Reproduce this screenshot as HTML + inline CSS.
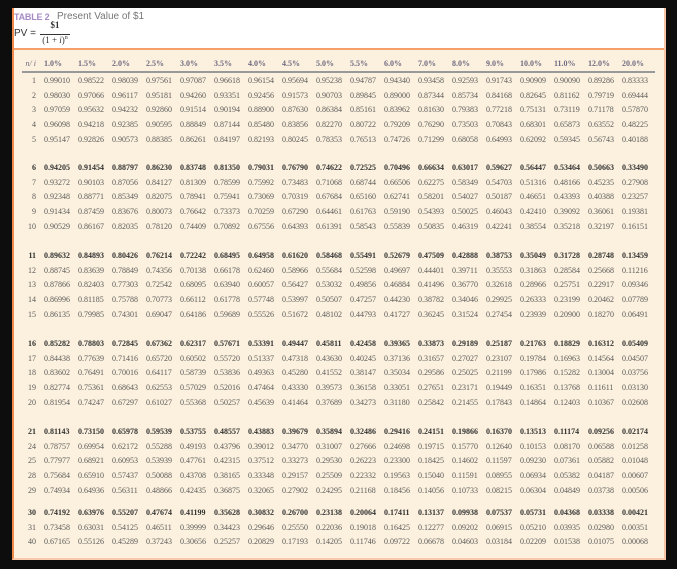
<!DOCTYPE html>
<html><head><meta charset="utf-8"><style>
html,body{margin:0;padding:0;background:#0d0d0d;width:677px;height:569px;overflow:hidden}
#panel{position:absolute;left:12px;top:8px;width:650px;height:550px;background:#fcf1de;border-left:2px solid #f08a4b;border-right:2px solid #f7c4a6;border-bottom:2px solid #f9c8ad}
#hdr{position:absolute;left:0;top:0;width:650px;height:40px;background:#fff;border-bottom:2px solid #f5a06a}
.t{position:absolute;font-family:"Liberation Sans",sans-serif;font-size:10px;color:#666;white-space:nowrap}
.s{font-family:"Liberation Serif",serif}
.g{position:absolute;left:-12px;font-family:"Liberation Serif",serif;font-size:8px;color:#5a5a5a}
.r{display:grid;grid-template-columns:42px repeat(18,34px);height:14.7px;line-height:14.7px;white-space:nowrap}
.r span:first-child{text-align:right;padding-right:8px}
.b{font-weight:bold;color:#333}
.h{font-weight:bold;color:#6f6a82}
</style></head><body>
<div id="panel">
<div id="hdr">
<div class="t" style="left:0;top:4px;color:#a58ac4;font-weight:bold;font-size:9px;letter-spacing:-0.2px">TABLE 2</div>
<div class="t" style="left:43px;top:3px;color:#777">Present Value of $1</div>
<div class="t" style="left:0;top:20px;color:#333">PV =</div>
<div class="t s" style="left:26px;top:12px;width:30px;text-align:center;font-weight:bold;color:#333;font-size:9px">$1</div>
<div style="position:absolute;left:26px;top:26px;width:30px;height:1px;background:#333"></div>
<div class="t s" style="left:24px;top:27px;width:34px;text-align:center;color:#333;font-size:9px">(1 + <i>i</i>)<sup style="font-size:6px">n</sup></div>
</div>
<div style="position:absolute;left:8px;top:63px;width:633px;height:2px;background:#999"></div>
<div class="g" style="top:49px"><div class="r h"><span style="font-style:italic;font-weight:normal">n/ i</span><span>1.0%</span><span>1.5%</span><span>2.0%</span><span>2.5%</span><span>3.0%</span><span>3.5%</span><span>4.0%</span><span>4.5%</span><span>5.0%</span><span>5.5%</span><span>6.0%</span><span>7.0%</span><span>8.0%</span><span>9.0%</span><span>10.0%</span><span>11.0%</span><span>12.0%</span><span>20.0%</span></div></div>
<div class="g" style="top:66px">
<div class="r"><span>1</span><span>0.99010</span><span>0.98522</span><span>0.98039</span><span>0.97561</span><span>0.97087</span><span>0.96618</span><span>0.96154</span><span>0.95694</span><span>0.95238</span><span>0.94787</span><span>0.94340</span><span>0.93458</span><span>0.92593</span><span>0.91743</span><span>0.90909</span><span>0.90090</span><span>0.89286</span><span>0.83333</span></div>
<div class="r"><span>2</span><span>0.98030</span><span>0.97066</span><span>0.96117</span><span>0.95181</span><span>0.94260</span><span>0.93351</span><span>0.92456</span><span>0.91573</span><span>0.90703</span><span>0.89845</span><span>0.89000</span><span>0.87344</span><span>0.85734</span><span>0.84168</span><span>0.82645</span><span>0.81162</span><span>0.79719</span><span>0.69444</span></div>
<div class="r"><span>3</span><span>0.97059</span><span>0.95632</span><span>0.94232</span><span>0.92860</span><span>0.91514</span><span>0.90194</span><span>0.88900</span><span>0.87630</span><span>0.86384</span><span>0.85161</span><span>0.83962</span><span>0.81630</span><span>0.79383</span><span>0.77218</span><span>0.75131</span><span>0.73119</span><span>0.71178</span><span>0.57870</span></div>
<div class="r"><span>4</span><span>0.96098</span><span>0.94218</span><span>0.92385</span><span>0.90595</span><span>0.88849</span><span>0.87144</span><span>0.85480</span><span>0.83856</span><span>0.82270</span><span>0.80722</span><span>0.79209</span><span>0.76290</span><span>0.73503</span><span>0.70843</span><span>0.68301</span><span>0.65873</span><span>0.63552</span><span>0.48225</span></div>
<div class="r"><span>5</span><span>0.95147</span><span>0.92826</span><span>0.90573</span><span>0.88385</span><span>0.86261</span><span>0.84197</span><span>0.82193</span><span>0.80245</span><span>0.78353</span><span>0.76513</span><span>0.74726</span><span>0.71299</span><span>0.68058</span><span>0.64993</span><span>0.62092</span><span>0.59345</span><span>0.56743</span><span>0.40188</span></div>
</div>
<div class="g" style="top:153px">
<div class="r b"><span>6</span><span>0.94205</span><span>0.91454</span><span>0.88797</span><span>0.86230</span><span>0.83748</span><span>0.81350</span><span>0.79031</span><span>0.76790</span><span>0.74622</span><span>0.72525</span><span>0.70496</span><span>0.66634</span><span>0.63017</span><span>0.59627</span><span>0.56447</span><span>0.53464</span><span>0.50663</span><span>0.33490</span></div>
<div class="r"><span>7</span><span>0.93272</span><span>0.90103</span><span>0.87056</span><span>0.84127</span><span>0.81309</span><span>0.78599</span><span>0.75992</span><span>0.73483</span><span>0.71068</span><span>0.68744</span><span>0.66506</span><span>0.62275</span><span>0.58349</span><span>0.54703</span><span>0.51316</span><span>0.48166</span><span>0.45235</span><span>0.27908</span></div>
<div class="r"><span>8</span><span>0.92348</span><span>0.88771</span><span>0.85349</span><span>0.82075</span><span>0.78941</span><span>0.75941</span><span>0.73069</span><span>0.70319</span><span>0.67684</span><span>0.65160</span><span>0.62741</span><span>0.58201</span><span>0.54027</span><span>0.50187</span><span>0.46651</span><span>0.43393</span><span>0.40388</span><span>0.23257</span></div>
<div class="r"><span>9</span><span>0.91434</span><span>0.87459</span><span>0.83676</span><span>0.80073</span><span>0.76642</span><span>0.73373</span><span>0.70259</span><span>0.67290</span><span>0.64461</span><span>0.61763</span><span>0.59190</span><span>0.54393</span><span>0.50025</span><span>0.46043</span><span>0.42410</span><span>0.39092</span><span>0.36061</span><span>0.19381</span></div>
<div class="r"><span>10</span><span>0.90529</span><span>0.86167</span><span>0.82035</span><span>0.78120</span><span>0.74409</span><span>0.70892</span><span>0.67556</span><span>0.64393</span><span>0.61391</span><span>0.58543</span><span>0.55839</span><span>0.50835</span><span>0.46319</span><span>0.42241</span><span>0.38554</span><span>0.35218</span><span>0.32197</span><span>0.16151</span></div>
</div>
<div class="g" style="top:241px">
<div class="r b"><span>11</span><span>0.89632</span><span>0.84893</span><span>0.80426</span><span>0.76214</span><span>0.72242</span><span>0.68495</span><span>0.64958</span><span>0.61620</span><span>0.58468</span><span>0.55491</span><span>0.52679</span><span>0.47509</span><span>0.42888</span><span>0.38753</span><span>0.35049</span><span>0.31728</span><span>0.28748</span><span>0.13459</span></div>
<div class="r"><span>12</span><span>0.88745</span><span>0.83639</span><span>0.78849</span><span>0.74356</span><span>0.70138</span><span>0.66178</span><span>0.62460</span><span>0.58966</span><span>0.55684</span><span>0.52598</span><span>0.49697</span><span>0.44401</span><span>0.39711</span><span>0.35553</span><span>0.31863</span><span>0.28584</span><span>0.25668</span><span>0.11216</span></div>
<div class="r"><span>13</span><span>0.87866</span><span>0.82403</span><span>0.77303</span><span>0.72542</span><span>0.68095</span><span>0.63940</span><span>0.60057</span><span>0.56427</span><span>0.53032</span><span>0.49856</span><span>0.46884</span><span>0.41496</span><span>0.36770</span><span>0.32618</span><span>0.28966</span><span>0.25751</span><span>0.22917</span><span>0.09346</span></div>
<div class="r"><span>14</span><span>0.86996</span><span>0.81185</span><span>0.75788</span><span>0.70773</span><span>0.66112</span><span>0.61778</span><span>0.57748</span><span>0.53997</span><span>0.50507</span><span>0.47257</span><span>0.44230</span><span>0.38782</span><span>0.34046</span><span>0.29925</span><span>0.26333</span><span>0.23199</span><span>0.20462</span><span>0.07789</span></div>
<div class="r"><span>15</span><span>0.86135</span><span>0.79985</span><span>0.74301</span><span>0.69047</span><span>0.64186</span><span>0.59689</span><span>0.55526</span><span>0.51672</span><span>0.48102</span><span>0.44793</span><span>0.41727</span><span>0.36245</span><span>0.31524</span><span>0.27454</span><span>0.23939</span><span>0.20900</span><span>0.18270</span><span>0.06491</span></div>
</div>
<div class="g" style="top:329px">
<div class="r b"><span>16</span><span>0.85282</span><span>0.78803</span><span>0.72845</span><span>0.67362</span><span>0.62317</span><span>0.57671</span><span>0.53391</span><span>0.49447</span><span>0.45811</span><span>0.42458</span><span>0.39365</span><span>0.33873</span><span>0.29189</span><span>0.25187</span><span>0.21763</span><span>0.18829</span><span>0.16312</span><span>0.05409</span></div>
<div class="r"><span>17</span><span>0.84438</span><span>0.77639</span><span>0.71416</span><span>0.65720</span><span>0.60502</span><span>0.55720</span><span>0.51337</span><span>0.47318</span><span>0.43630</span><span>0.40245</span><span>0.37136</span><span>0.31657</span><span>0.27027</span><span>0.23107</span><span>0.19784</span><span>0.16963</span><span>0.14564</span><span>0.04507</span></div>
<div class="r"><span>18</span><span>0.83602</span><span>0.76491</span><span>0.70016</span><span>0.64117</span><span>0.58739</span><span>0.53836</span><span>0.49363</span><span>0.45280</span><span>0.41552</span><span>0.38147</span><span>0.35034</span><span>0.29586</span><span>0.25025</span><span>0.21199</span><span>0.17986</span><span>0.15282</span><span>0.13004</span><span>0.03756</span></div>
<div class="r"><span>19</span><span>0.82774</span><span>0.75361</span><span>0.68643</span><span>0.62553</span><span>0.57029</span><span>0.52016</span><span>0.47464</span><span>0.43330</span><span>0.39573</span><span>0.36158</span><span>0.33051</span><span>0.27651</span><span>0.23171</span><span>0.19449</span><span>0.16351</span><span>0.13768</span><span>0.11611</span><span>0.03130</span></div>
<div class="r"><span>20</span><span>0.81954</span><span>0.74247</span><span>0.67297</span><span>0.61027</span><span>0.55368</span><span>0.50257</span><span>0.45639</span><span>0.41464</span><span>0.37689</span><span>0.34273</span><span>0.31180</span><span>0.25842</span><span>0.21455</span><span>0.17843</span><span>0.14864</span><span>0.12403</span><span>0.10367</span><span>0.02608</span></div>
</div>
<div class="g" style="top:417px">
<div class="r b"><span>21</span><span>0.81143</span><span>0.73150</span><span>0.65978</span><span>0.59539</span><span>0.53755</span><span>0.48557</span><span>0.43883</span><span>0.39679</span><span>0.35894</span><span>0.32486</span><span>0.29416</span><span>0.24151</span><span>0.19866</span><span>0.16370</span><span>0.13513</span><span>0.11174</span><span>0.09256</span><span>0.02174</span></div>
<div class="r"><span>24</span><span>0.78757</span><span>0.69954</span><span>0.62172</span><span>0.55288</span><span>0.49193</span><span>0.43796</span><span>0.39012</span><span>0.34770</span><span>0.31007</span><span>0.27666</span><span>0.24698</span><span>0.19715</span><span>0.15770</span><span>0.12640</span><span>0.10153</span><span>0.08170</span><span>0.06588</span><span>0.01258</span></div>
<div class="r"><span>25</span><span>0.77977</span><span>0.68921</span><span>0.60953</span><span>0.53939</span><span>0.47761</span><span>0.42315</span><span>0.37512</span><span>0.33273</span><span>0.29530</span><span>0.26223</span><span>0.23300</span><span>0.18425</span><span>0.14602</span><span>0.11597</span><span>0.09230</span><span>0.07361</span><span>0.05882</span><span>0.01048</span></div>
<div class="r"><span>28</span><span>0.75684</span><span>0.65910</span><span>0.57437</span><span>0.50088</span><span>0.43708</span><span>0.38165</span><span>0.33348</span><span>0.29157</span><span>0.25509</span><span>0.22332</span><span>0.19563</span><span>0.15040</span><span>0.11591</span><span>0.08955</span><span>0.06934</span><span>0.05382</span><span>0.04187</span><span>0.00607</span></div>
<div class="r"><span>29</span><span>0.74934</span><span>0.64936</span><span>0.56311</span><span>0.48866</span><span>0.42435</span><span>0.36875</span><span>0.32065</span><span>0.27902</span><span>0.24295</span><span>0.21168</span><span>0.18456</span><span>0.14056</span><span>0.10733</span><span>0.08215</span><span>0.06304</span><span>0.04849</span><span>0.03738</span><span>0.00506</span></div>
</div>
<div class="g" style="top:498px">
<div class="r b"><span>30</span><span>0.74192</span><span>0.63976</span><span>0.55207</span><span>0.47674</span><span>0.41199</span><span>0.35628</span><span>0.30832</span><span>0.26700</span><span>0.23138</span><span>0.20064</span><span>0.17411</span><span>0.13137</span><span>0.09938</span><span>0.07537</span><span>0.05731</span><span>0.04368</span><span>0.03338</span><span>0.00421</span></div>
<div class="r"><span>31</span><span>0.73458</span><span>0.63031</span><span>0.54125</span><span>0.46511</span><span>0.39999</span><span>0.34423</span><span>0.29646</span><span>0.25550</span><span>0.22036</span><span>0.19018</span><span>0.16425</span><span>0.12277</span><span>0.09202</span><span>0.06915</span><span>0.05210</span><span>0.03935</span><span>0.02980</span><span>0.00351</span></div>
<div class="r"><span>40</span><span>0.67165</span><span>0.55126</span><span>0.45289</span><span>0.37243</span><span>0.30656</span><span>0.25257</span><span>0.20829</span><span>0.17193</span><span>0.14205</span><span>0.11746</span><span>0.09722</span><span>0.06678</span><span>0.04603</span><span>0.03184</span><span>0.02209</span><span>0.01538</span><span>0.01075</span><span>0.00068</span></div>
</div>
</div>
</body></html>
